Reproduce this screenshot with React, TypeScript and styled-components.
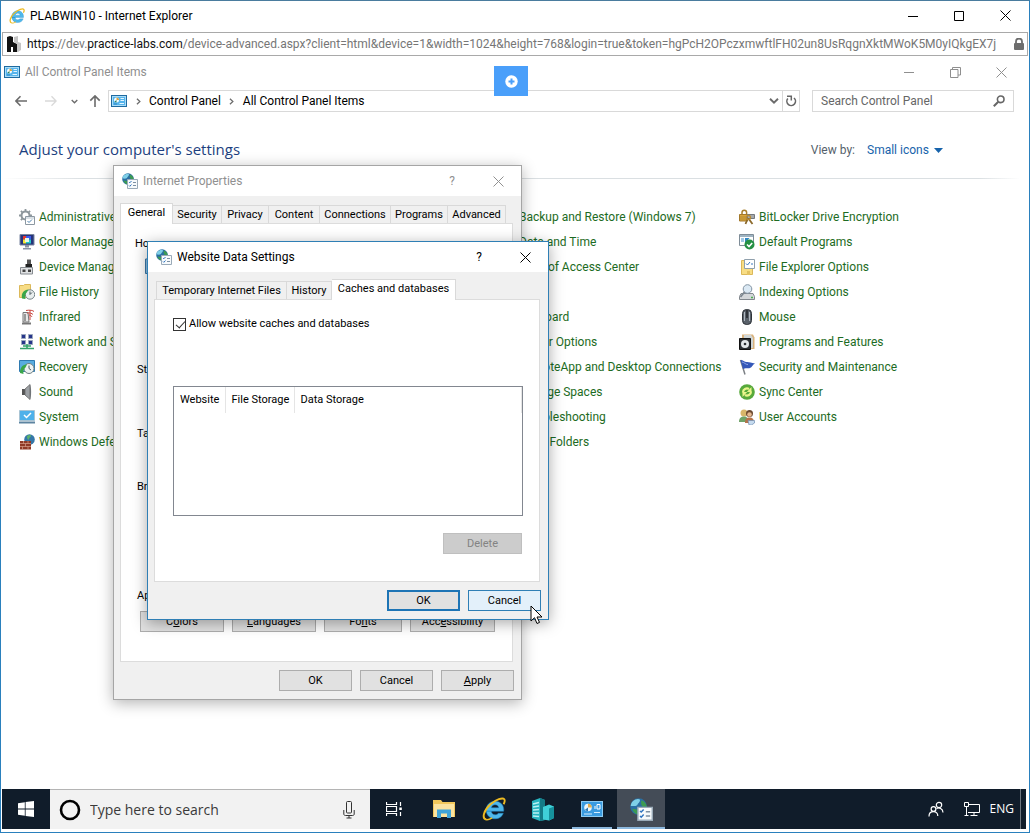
import React from "react";
import styled, { createGlobalStyle, css } from "styled-components";

const ui = `Roboto, "Open Sans", sans-serif`;
const display = `"Open Sans", "Noto Sans", sans-serif`;

const GlobalStyle = createGlobalStyle`
  * { box-sizing: border-box; }
  body { margin: 0; background: #fff; color: #000; font: 12px/16px ${ui}; }
  button, input, select { font: inherit; color: inherit; }
  ul { list-style: none; margin: 0; padding: 0; }
  svg { display: block; flex: none; }
`;

/* ---------- outer browser window ---------- */

const BrowserWindow = styled.div`
  min-height: 100vh;
  display: flex;
  flex-direction: column;
  border: 1px solid #2a80bd;
  border-top-color: #4a7c9e;
  padding: 0 1px 3px 1px;
  overflow: hidden;
`;

const TitleBar = styled.header<{ $inactive?: boolean }>`
  display: flex;
  align-items: center;
  gap: 5px;
  height: ${(p) => (p.$inactive ? 32 : 29)}px;
  margin-bottom: ${(p) => (p.$inactive ? 0 : 2)}px;
  padding: ${(p) => (p.$inactive ? "0 2px" : "0 0 0 7px")};
  color: ${(p) => (p.$inactive ? "#8f8f8f" : "#000")};
`;

const WindowTitle = styled.span`
  flex: 1;
  white-space: nowrap;
`;

const CaptionButton = styled.button`
  width: 46px;
  height: 29px;
  padding: 0;
  border: 0;
  background: none;
  display: flex;
  align-items: center;
  justify-content: center;
`;

const CaptionGroup = styled.div`
  display: flex;
`;

const AddressBar = styled.div`
  display: flex;
  align-items: center;
  gap: 4px;
  height: 24px;
  padding: 0 2px 0 4px;
  border: 1px solid #a9a9a9;
`;

const AddressLink = styled.a`
  flex: 1;
  min-width: 0;
  overflow: hidden;
  white-space: nowrap;
  color: #767676;
  text-decoration: none;
  b { color: #111; font-weight: 400; }
`;

/* ---------- remote desktop ---------- */

const Desktop = styled.main`
  position: relative;
  flex: 1;
  display: flex;
  flex-direction: column;
  margin-right: 2px;
`;

const SessionTab = styled.button`
  position: absolute;
  top: 10px;
  left: calc(50% - 20px);
  width: 34px;
  height: 30px;
  padding: 0;
  border: 0;
  background: #4a9ffa;
  display: flex;
  align-items: center;
  justify-content: center;
`;

const NavRow = styled.nav`
  display: flex;
  align-items: center;
  height: 22px;
  margin-top: 2px;
  padding: 0 12px 0 4px;
`;

const NavButton = styled.button<{ $w: number }>`
  width: ${(p) => p.$w}px;
  height: 20px;
  padding: 0;
  border: 0;
  background: none;
  display: flex;
  align-items: center;
  justify-content: center;
`;

const PathBox = styled.div`
  flex: 1;
  display: flex;
  align-items: center;
  height: 22px;
  padding-left: 2px;
  border: 1px solid #d9d9d9;
`;

const Crumb = styled.a`
  color: #000;
  text-decoration: none;
  white-space: nowrap;
`;

const Chevron = styled.span`
  width: 22px;
  display: flex;
  justify-content: center;
`;

const PathTail = styled.div`
  flex: 1;
  display: flex;
  justify-content: flex-end;
`;

const RefreshCell = styled.div`
  border-left: 1px solid #d9d9d9;
`;

const SearchBox = styled.label`
  display: flex;
  align-items: center;
  width: 202px;
  height: 22px;
  margin-left: 12px;
  padding: 0 8px;
  border: 1px solid #d9d9d9;
  input {
    flex: 1;
    min-width: 0;
    padding: 0;
    border: 0;
    outline: 0;
    background: none;
  }
  input::placeholder { color: #666; opacity: 1; }
`;

const HeadingRow = styled.div`
  display: flex;
  align-items: center;
  justify-content: space-between;
  height: 66px;
  padding: 10px 83px 0 17px;
`;

const Heading = styled.h1`
  margin: 0;
  padding-bottom: 2px;
  font-family: ${display};
  font-size: 15px;
  line-height: 20px;
  font-weight: 400;
  color: #1d3f80;
`;

const ViewBy = styled.label`
  display: flex;
  align-items: center;
  color: #555f6b;
  gap: 12px;
`;

const ViewSelect = styled.span`
  display: flex;
  align-items: center;
  gap: 5px;
  color: #1763ab;
  select {
    appearance: none;
    border: 0;
    padding: 0;
    background: none;
  }
`;

const Rule = styled.div`
  height: 1px;
  margin-right: 6px;
  background: linear-gradient(90deg, #fff, #dadfe2 8%, #dadfe2 96%, #fff);
`;

const ItemGrid = styled.div`
  display: grid;
  grid-template-columns: repeat(4, 240px);
  padding: 25px 0 0 17px;
  flex: 1;
`;

const ItemColumn = styled.ul<{ $col: number }>`
  grid-column: ${(p) => p.$col};
`;

const Item = styled.li`
  height: 25px;
  display: flex;
  align-items: center;
`;

const ItemLink = styled.a`
  display: flex;
  align-items: center;
  gap: 4px;
  color: #1d6b23;
  text-decoration: none;
  white-space: nowrap;
`;

const IconSlot = styled.span`
  width: 16px;
  height: 16px;
`;

/* ---------- dialogs ---------- */

const Dialog = styled.section<{ $x: number; $y: number; $w: number; $active?: boolean }>`
  position: absolute;
  left: ${(p) => p.$x}px;
  top: ${(p) => p.$y}px;
  width: ${(p) => p.$w}px;
  padding-bottom: 8px;
  background: #f0f0f0;
  font-size: 11px;
  border: 1px solid ${(p) => (p.$active ? "#2f7fb5" : "#a5a5a5")};
  box-shadow: ${(p) =>
    p.$active ? "0 3px 14px rgba(0,0,0,.34)" : "0 3px 14px rgba(0,0,0,.3)"};
`;

const DialogTitle = styled.header<{ $active?: boolean }>`
  display: flex;
  align-items: center;
  gap: 5px;
  height: 30px;
  padding-left: 8px;
  background: #fff;
  font-size: 12px;
  color: ${(p) => (p.$active ? "#000" : "#909090")};
`;

const TabStrip = styled.div<{ $indent?: boolean }>`
  display: flex;
  align-items: flex-end;
  height: 27px;
  padding-left: ${(p) => (p.$indent ? 8 : 6)}px;
`;

const Tab = styled.button<{ $selected?: boolean; $w: number }>`
  position: relative;
  width: ${(p) => p.$w}px;
  height: 18px;
  padding: 0;
  border: 1px solid #d9d9d9;
  border-bottom: 0;
  border-left-width: 0;
  background: #f0f0f0;
  line-height: 16px;
  white-space: nowrap;
  &:first-child { border-left-width: 1px; }
  ${(p) =>
    p.$selected &&
    css`
      height: 21px;
      margin-bottom: -1px;
      padding-bottom: 2px;
      background: #fff;
      z-index: 1;
    `}
`;

const TabPanel = styled.div<{ $h: number }>`
  height: ${(p) => p.$h}px;
  margin: 0 8px 0 6px;
  background: #fff;
  border: 1px solid #dcdcdc;
`;

const ButtonRow = styled.div`
  display: flex;
  justify-content: flex-end;
  gap: 8px;
  padding: 8px 7px 0 0;
`;

const PushButton = styled.button<{ $w?: number; $tone?: "default" | "hover" }>`
  width: ${(p) => p.$w ?? 73}px;
  height: 21px;
  padding: 0;
  border: 1px solid #adadad;
  background: #e1e1e1;
  line-height: 16px;
  ${(p) => p.$tone === "default" && css`border: 2px solid #1d74b5;`}
  ${(p) => p.$tone === "hover" && css`border-color: #2f7fb5; background: #e3f0fa;`}
  &:disabled { background: #cccccc; border-color: #bfbfbf; color: #838383; }
`;

const GeneralPage = styled.div`
  display: flex;
  flex-direction: column;
  padding: 12px 0 0 14px;
`;

const GroupLabel = styled.div<{ $space: number; $inset?: boolean }>`
  height: 16px;
  margin-bottom: ${(p) => p.$space}px;
  padding-left: ${(p) => (p.$inset ? 2 : 0)}px;
`;

const HomeIcon = styled.div`
  padding-left: 10px;
  height: 16px;
  margin-bottom: 88px;
`;

const AppearanceRow = styled.div`
  display: flex;
  gap: 8px;
  padding-left: 5px;
`;

const CachePage = styled.div`
  display: flex;
  flex-direction: column;
  padding: 16px 16px 0 18px;
`;

const CheckLabel = styled.label`
  display: flex;
  align-items: center;
  gap: 3px;
  height: 16px;
`;

const CheckBox = styled.input`
  appearance: none;
  position: relative;
  width: 13px;
  height: 13px;
  margin: 0;
  border: 1px solid #333;
  background: #fff;
  &:checked::after {
    content: "";
    position: absolute;
    left: 4px;
    top: 0;
    width: 4px;
    height: 8px;
    border: solid #333;
    border-width: 0 1px 1px 0;
    transform: rotate(42deg);
  }
`;

const ListBox = styled.div`
  height: 130px;
  margin-top: 54px;
  border: 1px solid #828790;
`;

const DataTable = styled.table`
  width: 100%;
  table-layout: fixed;
  border-collapse: collapse;
  th {
    height: 26px;
    padding: 0 0 0 6px;
    border-right: 1px solid #e5e5e5;
    font-weight: 400;
    text-align: left;
    white-space: nowrap;
  }
  th:nth-child(1) { width: 51px; }
  th:nth-child(2) { width: 69px; }
`;

const DeleteRow = styled.div`
  display: flex;
  justify-content: flex-end;
  padding: 17px 1px 0 0;
`;

const Pointer = styled.svg`
  position: absolute;
  left: 528px;
  top: 549px;
`;

/* ---------- taskbar ---------- */

const Taskbar = styled.footer`
  display: flex;
  height: 40px;
  background: #101c2a;
  color: #fff;
`;

const TaskButton = styled.button<{ $active?: boolean; $running?: boolean; $w?: number }>`
  width: ${(p) => p.$w ?? 48}px;
  height: 40px;
  margin-right: 1px;
  padding: ${(p) => (p.$active || p.$running ? "2px 0 0" : "0")};
  border: 0;
  border-bottom: ${(p) => (p.$active || p.$running ? "2px solid #8cb8de" : "0")};
  background: ${(p) => (p.$active ? "#444c57" : "none")};
  display: flex;
  align-items: center;
  justify-content: center;
  ${(p) => p.$running && css`width: 40px; margin: 0 5px 0 4px;`}
`;

const StartButton = styled(TaskButton)`
  margin-right: 0;
`;

const Cortana = styled.label`
  display: flex;
  align-items: center;
  width: 320px;
  padding: 0 15px 0 9px;
  background: #f2f2f2;
  border-top: 1px solid #b4b4b4;
  color: #333;
  input {
    flex: 1;
    min-width: 0;
    margin-left: 9px;
    padding: 0;
    border: 0;
    outline: 0;
    background: none;
    font-family: ${display};
    font-size: 14px;
    line-height: 20px;
  }
  input::placeholder { color: #3a3a3a; opacity: 1; }
`;

const Tray = styled.div`
  flex: 1;
  display: flex;
  align-items: center;
  justify-content: flex-end;
  gap: 10px;
  font-family: ${display};
`;

const PeopleSlot = styled.span`
  padding-right: 10px;
`;

const ShowDesktop = styled.button`
  width: 6px;
  height: 40px;
  padding: 0;
  margin-left: -4px;
  border: 0;
  border-left: 1px solid #6d757e;
  background: none;
`;

/* ---------- drawings ---------- */

const Svg = ({ size = 16, vb = 16, children }: { size?: number; vb?: number; children: React.ReactNode }) => (
  <svg width={size} height={size} viewBox={`0 0 ${vb} ${vb}`} fill="none" aria-hidden="true">
    {children}
  </svg>
);

const MinIcon = () => (
  <Svg size={10} vb={10}><path d="M0 5.5h10" stroke="currentColor" /></Svg>
);
const MaxIcon = () => (
  <Svg size={10} vb={10}><path d="M.5.5h9v9h-9z" stroke="currentColor" /></Svg>
);
const RestoreIcon = () => (
  <Svg size={11} vb={11}><path d="M.5 2.5h7.5v8H.5zM2.5 2.5v-2h8v7.5H8" stroke="currentColor" /></Svg>
);
const CloseIcon = () => (
  <Svg size={11} vb={11}><path d="M.5.5l10 10M10.5.5l-10 10" stroke="currentColor" /></Svg>
);

const IeIcon = ({ size = 16 }: { size?: number }) => (
  <Svg size={size} vb={24}>
    <path d="M4.5 14.200h17.200c.6-5.800-3-10-8.700-10-5 0-8.800 3.700-8.800 8.800s3.700 8.800 8.900 8.800c4 0 7-2 8.200-5.500h-5c-.7 1-1.700 1.500-3.100 1.500-2.200 0-3.700-1.400-3.900-3.600zM9.400 10.700c.4-1.900 1.800-3 3.700-3s3.300 1.100 3.600 3z" fill="#4fb8ea" stroke="#1d86c4" strokeWidth=".5" fillRule="evenodd" />
    <path d="M4 22.500C-.500 21 2 13 8.500 7.300 14 2.400 20.800.2 22.300 2.300c.8 1.100.3 3-.7 4.900" stroke="#eebb22" strokeWidth="1.900" />
    <path d="M4 22.500c1.700.5 4-.4 6.200-1.700" stroke="#eebb22" strokeWidth="1.500" />
  </Svg>
);

const SiteIcon = () => (
  <Svg>
    <path d="M0 1l3-1 3 1v5l4 2v8H6v-5H4v5H0z" fill="#111" />
    <path d="M7 1l4-1v6l3 1v7l-3 2h-1V8L7 6z" fill="#c4c4c4" />
  </Svg>
);

const LockIcon = () => (
  <Svg size={12} vb={12}>
    <path d="M3 6V3.500a3 3 0 016 0V6" stroke="#6d6d6d" strokeWidth="1.800" />
    <rect x="1" y="5" width="10" height="7" rx="1" fill="#6d6d6d" />
  </Svg>
);

const PanelIcon = () => (
  <Svg>
    <rect x=".5" y="2.500" width="15" height="11" fill="#55b4ec" stroke="#1f6a9f" />
    <rect x="1.500" y="3.500" width="13" height="9" stroke="#a8dcf8" />
    <circle cx="5.500" cy="7" r="2.500" fill="#f4fbff" />
    <path d="M5.500 7V4.500A2.500 2.500 0 018 7z" fill="#e0a33e" />
    <path d="M5.500 7l-2 1.500A2.500 2.500 0 005.500 9.500z" fill="#2f7f57" />
    <path d="M9.500 5.500h3.500M9.500 7.500h3.500M8.500 10.500h4.500" stroke="#e4f5fe" />
    <path d="M3 11h3" stroke="#2d86c4" />
  </Svg>
);

const GlobeListIcon = ({ size = 16 }: { size?: number }) => (
  <Svg size={size}>
    <circle cx="6" cy="6" r="5.800" fill="#2b6fa3" />
    <path d="M2 2.300C4 .5 6 .3 7 1.200 7 3 5.500 3.500 5 5 3.500 6 2 5.500.5 5.500c0-1 .6-2.300 1.500-3.200z" fill="#7fd0e8" />
    <path d="M8 1.500c2 .6 3.400 2.500 3.700 4.500H9C7.500 5 7.500 3 8 1.500zM1.500 7.500L5 8l.5 3.500C3.500 11 2 9.500 1.500 7.500z" fill="#3d9b52" />
    <path d="M5.500 6.500h10v9h-10z" fill="#f7fafc" stroke="#9aaab8" />
    <path d="M7 9l.8.8L9.500 8M7 12.500l.8.8L9.500 11.500" stroke="#2f74c0" />
    <path d="M11 9.500h3M11 12.500h3" stroke="#7d90a3" />
  </Svg>
);

const BackIcon = () => (
  <Svg size={12} vb={12}><path d="M12 6H1M5.500 1.300L.9 6l4.600 4.700" stroke="#6b6b6b" strokeWidth="1.600" /></Svg>
);
const ForwardIcon = () => (
  <Svg size={12} vb={12}><path d="M0 6h11M6.500 1.300L11.100 6l-4.600 4.700" stroke="#d9d9d9" strokeWidth="1.300" /></Svg>
);
const UpIcon = () => (
  <Svg size={12} vb={12}><path d="M6 12V1M1.300 5.600L6 .9l4.700 4.700" stroke="#6b6b6b" strokeWidth="1.600" /></Svg>
);
const DownIcon = ({ size = 7 }: { size?: number }) => (
  <Svg size={size} vb={8}><path d="M.8 2.200L4 5.400l3.200-3.200" stroke="#6b6b6b" strokeWidth="1.500" /></Svg>
);
const RightIcon = () => (
  <Svg size={7} vb={8}><path d="M2.200 .8L5.600 4 2.200 7.200" stroke="#6b6b6b" strokeWidth="1.400" /></Svg>
);
const RefreshIcon = () => (
  <Svg size={12} vb={12}>
    <path d="M9 3A4.300 4.300 0 112.800 3.600" stroke="#666" strokeWidth="1.600" />
    <path d="M2 1.300h4.300v4.200" stroke="#666" strokeWidth="1.500" />
  </Svg>
);
const MagnifierIcon = () => (
  <Svg size={12} vb={12}>
    <circle cx="7.700" cy="4.300" r="3.300" stroke="#666" strokeWidth="1.600" />
    <path d="M5.300 6.800L.8 11.300" stroke="#666" strokeWidth="2" />
  </Svg>
);

const drawings: Record<string, React.ReactNode> = {
  gear: (
    <>
      <circle cx="6.500" cy="6.500" r="4" stroke="#8e979c" strokeWidth="2" />
      <path d="M6.500 0v2.500M0 6.500h2.500M1.900 1.900l1.700 1.700M11.100 1.900L9.400 3.600M1.900 11.100l1.700-1.700M10.500 6.500H13" stroke="#8e979c" strokeWidth="1.800" />
      <path d="M6.500 7.500h9v8h-9z" fill="#fff" stroke="#8c98a2" />
      <path d="M7 9h8" stroke="#b5c3cc" />
      <path d="M8.500 12l1.500 1.500 3-3" stroke="#4d80ad" />
    </>
  ),
  color: (
    <>
      <path d="M1 .5h14v10.500H1z" fill="#26347a" stroke="#7a86a0" />
      <path d="M4 2h3v3.500H4z" fill="#e6382f" />
      <path d="M7 2h5v3.500H7z" fill="#3a5cf0" />
      <path d="M4 5.500h3V9.500H4z" fill="#f6e834" />
      <path d="M7 5.500h5v4H7z" fill="#27c8c8" />
      <path d="M6 4h4v4H6z" fill="#e8f8e8" />
      <path d="M6 11h4v2.500H6zM4 14h8v1.500H4z" fill="#8a93a5" />
    </>
  ),
  device: (
    <>
      <path d="M8 .5h4v5H8z" fill="#555" />
      <path d="M6.500 5h6.500v5H6.500z" fill="#222" />
      <path d="M1.500 8.500h12v6.500h-12z" fill="#dfe1e3" stroke="#868b90" />
      <path d="M3.500 10.500h3v2.500h-3zM9 10.500h3v2.500H9z" fill="#444" />
    </>
  ),
  history: (
    <>
      <path d="M.5 1.500h4l1-1h6v13H.5z" fill="#f7dc85" stroke="#dcb95a" />
      <circle cx="11" cy="10.500" r="4.700" fill="#e9eeee" stroke="#77858a" />
      <path d="M11 7.500v3l2-2" stroke="#4b5a60" />
      <path d="M3 14.500C2 9 5 5.500 9.500 5.500L8 8C6 10 6 12 6.500 15z" fill="#3aa648" />
    </>
  ),
  infrared: (
    <>
      <path d="M4 3.500h5l1 9.500H4z" fill="#e8e8e8" stroke="#777" />
      <path d="M6 5v7" stroke="#999" strokeWidth="2" />
      <path d="M3 14.500h9" stroke="#777" strokeWidth="2" />
      <path d="M7 1.500c4-.8 7 0 8 1M8 4c3-.5 5 .5 6 1.500M10 6c1.500 0 2.500 1 3 2M11 1v10" stroke="#c9463f" />
    </>
  ),
  network: (
    <>
      <path d="M2.500.5h4v4h-4zM9.500.5h4v4h-4zM2.500 6.500h4v4h-4zM9.500 6.500h4v4h-4z" fill="#26358a" stroke="#9aa7bd" />
      <path d="M8 10v4M4 12h8M1 14.500h14" stroke="#35a26b" strokeWidth="1.600" />
    </>
  ),
  recovery: (
    <>
      <path d="M.5 1.500h15v11H.5z" fill="#58ace0" stroke="#2f7ab0" />
      <circle cx="10" cy="9.500" r="5" fill="#edf2f2" stroke="#6f8085" />
      <path d="M10 6.500v3l2 1.500" stroke="#4b5a60" />
      <path d="M1 14C1 8 4 5.500 8 5.500L6.500 8.500C4.500 10 4 12 4.500 15z" fill="#3aa648" />
    </>
  ),
  sound: (
    <>
      <path d="M3 5h3v6H3z" fill="#555" />
      <path d="M6 5l5-4.500v15L6 11z" fill="#9da1a5" stroke="#666" strokeWidth=".8" />
      <path d="M11 .5c1.500 3 1.500 12 0 15z" fill="#707478" />
    </>
  ),
  system: (
    <>
      <path d="M.5 1.500h15v10H.5z" fill="#4fb1ea" stroke="#a9c4d4" />
      <path d="M5 6l2.500 2.500L12 4" stroke="#fff" strokeWidth="1.500" />
      <path d="M0 13.500h16" stroke="#5d84a0" strokeWidth="2" />
    </>
  ),
  firewall: (
    <>
      <circle cx="10.500" cy="5.500" r="5.300" fill="#3577a8" />
      <path d="M8 2c2-1.500 4-1 4 0s-2 1.500-2 3-2 1-2-3z" fill="#5cb36a" />
      <path d="M1 7h11v8.500H1z" fill="#8f3a26" />
      <path d="M1 9.500h11M1 12.500h11M4.500 7v2.500M9 7v2.500M6.500 9.500v3M3.500 12.500v3M9 12.500v3" stroke="#d9a08c" strokeWidth=".7" />
    </>
  ),
  bitlocker: (
    <>
      <path d="M3 6V3.500a2.300 2.300 0 014.600 0V6" stroke="#a97f2c" strokeWidth="1.500" />
      <path d="M.5 5.500h8V12h-8z" fill="#d8a53d" stroke="#a3782a" />
      <path d="M1 8h7M1 10h7" stroke="#a3782a" strokeWidth=".6" />
      <path d="M8.500 5.500h7v4h-7z" fill="#a5a9ad" stroke="#74797e" />
      <path d="M9 9l-2.500 6M9.500 9.500l4 5.500" stroke="#8c6a2c" strokeWidth="1.800" />
      <circle cx="9.500" cy="8.500" r="2" stroke="#b88b34" strokeWidth="1.300" />
    </>
  ),
  defaults: (
    <>
      <path d="M.5.5h14v11H.5z" fill="#fff" stroke="#7e8c97" />
      <path d="M1 2h13" stroke="#9fb4c2" strokeWidth="2" />
      <path d="M2 4h3v4H2z" fill="#9fc8e4" />
      <path d="M6 4h4.500L6 9z" fill="#2f86c4" />
      <circle cx="10.500" cy="10.500" r="5" fill="#249043" />
      <path d="M8 10.500l2 2 3.200-3.500" stroke="#fff" strokeWidth="1.600" />
    </>
  ),
  explorer: (
    <>
      <path d="M2.500 1.500h11v14h-11z" fill="#f8dd84" stroke="#dbb85a" />
      <path d="M5.500.5h10v9h-10z" fill="#fff" stroke="#90a0ac" />
      <path d="M7 4.500l1.500 1.500 2.500-3M12 5h2" stroke="#3a78bf" />
      <path d="M9.500 12v4" stroke="#e4c263" strokeWidth="3" />
    </>
  ),
  indexing: (
    <>
      <path d="M2 9.500h12l1.500 3v3H.5v-3z" fill="#d4d7da" stroke="#82888e" />
      <path d="M12 13.500h2" stroke="#4caf50" strokeWidth="1.500" />
      <circle cx="8.500" cy="5" r="4.300" fill="#dbe9f4" stroke="#8394a3" />
      <path d="M5.500 8L1.500 13" stroke="#7d8790" strokeWidth="1.800" />
    </>
  ),
  mouse: (
    <>
      <rect x="3.500" y=".5" width="9" height="15" rx="4" fill="#59616a" stroke="#2d3238" />
      <path d="M5.500 3v9M10.500 3v9" stroke="#aeb6be" />
      <path d="M8 1v8" stroke="#22262b" strokeWidth="1.500" />
    </>
  ),
  programs: (
    <>
      <path d="M3 .5h11l1.500 3V15H3z" fill="#d9b27d" />
      <path d="M5 1h7l2 3v10H5z" fill="#cfd6d8" />
      <path d="M.5 4.500h11v11H.5z" fill="#2b2f33" stroke="#111" />
      <circle cx="6" cy="10" r="4" fill="#e4e8ea" />
      <circle cx="6" cy="10" r="1.300" fill="#2b2f33" />
    </>
  ),
  flag: (
    <>
      <path d="M1.500 1l4.500 14.500" stroke="#7c8085" strokeWidth="1.500" />
      <path d="M1.500 1c3 0 4 2.300 6.500 2 2-.2 4 1 8 1.500-2.500 1-3 4-5 4.500-2 .5-5-.5-7 1z" fill="#3558b8" />
      <path d="M3 3c3 .5 3 2.500 6 2.500" stroke="#8ea6e6" />
    </>
  ),
  sync: (
    <>
      <circle cx="8" cy="8" r="7.800" fill="#57a93b" />
      <path d="M4 8.500A4 4 0 0110 5M12 7.500A4 4 0 016 11" stroke="#eaf58c" strokeWidth="2.200" />
      <path d="M12.500 3v5H7.800zM3.500 13V8h4.700z" fill="#eaf58c" />
    </>
  ),
  users: (
    <>
      <circle cx="5" cy="4" r="3.500" fill="#d8b66a" />
      <path d="M0 13c0-4 2-5.500 5-5.500S9 9 9 13z" fill="#6fa368" />
      <circle cx="10.500" cy="4.500" r="3.500" fill="#6b4930" />
      <circle cx="10.500" cy="5.500" r="2.300" fill="#e5b78e" />
      <path d="M6 14c0-4 1.500-5.500 4.500-5.500s4.500 1.500 4.500 5.500z" fill="#b5734a" />
      <path d="M9 11.500h6.500V14l-3 2H10z" fill="#c6dbef" stroke="#6d8db1" strokeWidth=".7" />
    </>
  ),
};

/* ---------- data ---------- */

type Entry = { name: string; icon?: string } | null;

const columns: { col: number; items: Entry[] }[] = [
  {
    col: 1,
    items: [
      { name: "Administrative Tools", icon: "gear" },
      { name: "Color Management", icon: "color" },
      { name: "Device Manager", icon: "device" },
      { name: "File History", icon: "history" },
      { name: "Infrared", icon: "infrared" },
      { name: "Network and Sharing Center", icon: "network" },
      { name: "Recovery", icon: "recovery" },
      { name: "Sound", icon: "sound" },
      { name: "System", icon: "system" },
      { name: "Windows Defender Firewall", icon: "firewall" },
    ],
  },
  {
    col: 3,
    items: [
      { name: "Backup and Restore (Windows 7)" },
      { name: "Date and Time" },
      { name: "Ease of Access Center" },
      null,
      { name: "Keyboard" },
      { name: "Power Options" },
      { name: "RemoteApp and Desktop Connections" },
      { name: "Storage Spaces" },
      { name: "Troubleshooting" },
      { name: "Work Folders" },
    ],
  },
  {
    col: 4,
    items: [
      { name: "BitLocker Drive Encryption", icon: "bitlocker" },
      { name: "Default Programs", icon: "defaults" },
      { name: "File Explorer Options", icon: "explorer" },
      { name: "Indexing Options", icon: "indexing" },
      { name: "Mouse", icon: "mouse" },
      { name: "Programs and Features", icon: "programs" },
      { name: "Security and Maintenance", icon: "flag" },
      { name: "Sync Center", icon: "sync" },
      { name: "User Accounts", icon: "users" },
    ],
  },
];

const propertyTabs: [string, number][] = [
  ["General", 53],
  ["Security", 49],
  ["Privacy", 47],
  ["Content", 51],
  ["Connections", 71],
  ["Programs", 57],
  ["Advanced", 58],
];

/* ---------- page ---------- */

const ControlPanel = () => (
  <>
    <TitleBar $inactive>
      <PanelIcon />
      <WindowTitle>All Control Panel Items</WindowTitle>
      <CaptionGroup>
        <CaptionButton aria-label="Minimize"><MinIcon /></CaptionButton>
        <CaptionButton aria-label="Restore"><RestoreIcon /></CaptionButton>
        <CaptionButton aria-label="Close"><CloseIcon /></CaptionButton>
      </CaptionGroup>
    </TitleBar>
    <NavRow>
      <NavButton $w={30} aria-label="Back"><BackIcon /></NavButton>
      <NavButton $w={30} aria-label="Forward"><ForwardIcon /></NavButton>
      <NavButton $w={16} aria-label="Recent"><DownIcon /></NavButton>
      <NavButton $w={26} aria-label="Up"><UpIcon /></NavButton>
      <PathBox>
        <PanelIcon />
        <Chevron><RightIcon /></Chevron>
        <Crumb href="#">Control Panel</Crumb>
        <Chevron><RightIcon /></Chevron>
        <Crumb href="#">All Control Panel Items</Crumb>
        <PathTail>
          <NavButton $w={16} aria-label="Previous locations"><DownIcon size={10} /></NavButton>
          <RefreshCell>
            <NavButton $w={16} aria-label="Refresh"><RefreshIcon /></NavButton>
          </RefreshCell>
        </PathTail>
      </PathBox>
      <SearchBox>
        <input type="text" placeholder="Search Control Panel" aria-label="Search Control Panel" />
        <MagnifierIcon />
      </SearchBox>
    </NavRow>
    <HeadingRow>
      <Heading>Adjust your computer's settings</Heading>
      <ViewBy>
        View by:
        <ViewSelect>
          <select defaultValue="small">
            <option value="small">Small icons</option>
          </select>
          <svg width="9" height="5" viewBox="0 0 9 5" aria-hidden="true">
            <path d="M0 0h9L4.500 5z" fill="#1763ab" />
          </svg>
        </ViewSelect>
      </ViewBy>
    </HeadingRow>
    <Rule />
    <ItemGrid>
      {columns.map(({ col, items }) => (
        <ItemColumn key={col} $col={col}>
          {items.map((item, i) => (
            <Item key={i}>
              {item && (
                <ItemLink href="#">
                  {item.icon ? <Svg>{drawings[item.icon]}</Svg> : <IconSlot />}
                  {item.name}
                </ItemLink>
              )}
            </Item>
          ))}
        </ItemColumn>
      ))}
    </ItemGrid>
  </>
);

const InternetProperties = () => (
  <Dialog $x={111} $y={109} $w={409} aria-label="Internet Properties">
    <DialogTitle>
      <GlobeListIcon />
      <WindowTitle>Internet Properties</WindowTitle>
      <CaptionGroup>
        <CaptionButton aria-label="Help">?</CaptionButton>
        <CaptionButton aria-label="Close"><CloseIcon /></CaptionButton>
      </CaptionGroup>
    </DialogTitle>
    <TabStrip role="tablist">
      {propertyTabs.map(([name, w], i) => (
        <Tab key={name} role="tab" $w={w} $selected={i === 0}>{name}</Tab>
      ))}
    </TabStrip>
    <TabPanel $h={439}>
      <GeneralPage>
        <GroupLabel $space={6}>Home page</GroupLabel>
        <HomeIcon>
          <Svg><path d="M.5 1v14.500h14V6L8 .8.500 1z" fill="#8fbfe2" stroke="#3a78a8" /></Svg>
        </HomeIcon>
        <GroupLabel $inset $space={48}>Startup</GroupLabel>
        <GroupLabel $inset $space={37}>Tabs</GroupLabel>
        <GroupLabel $inset $space={93}>Browsing history</GroupLabel>
        <GroupLabel $inset $space={7}>Appearance</GroupLabel>
        <AppearanceRow>
          <PushButton $w={84}>C<u>o</u>lors</PushButton>
          <PushButton $w={84}><u>L</u>anguages</PushButton>
          <PushButton $w={78}>Fo<u>n</u>ts</PushButton>
          <PushButton $w={85}>Acc<u>e</u>ssibility</PushButton>
        </AppearanceRow>
      </GeneralPage>
    </TabPanel>
    <ButtonRow>
      <PushButton>OK</PushButton>
      <PushButton>Cancel</PushButton>
      <PushButton><u>A</u>pply</PushButton>
    </ButtonRow>
  </Dialog>
);

const WebsiteDataSettings = () => (
  <Dialog $active $x={145} $y={185} $w={402} aria-label="Website Data Settings">
    <DialogTitle $active>
      <GlobeListIcon />
      <WindowTitle>Website Data Settings</WindowTitle>
      <CaptionGroup>
        <CaptionButton aria-label="Help">?</CaptionButton>
        <CaptionButton aria-label="Close"><CloseIcon /></CaptionButton>
      </CaptionGroup>
    </DialogTitle>
    <TabStrip role="tablist" $indent>
      <Tab role="tab" $w={131}>Temporary Internet Files</Tab>
      <Tab role="tab" $w={45}>History</Tab>
      <Tab role="tab" $w={124} $selected>Caches and databases</Tab>
    </TabStrip>
    <TabPanel $h={283}>
      <CachePage>
        <CheckLabel>
          <CheckBox type="checkbox" defaultChecked />
          Allow website caches and databases
        </CheckLabel>
        <ListBox>
          <DataTable>
            <thead>
              <tr><th>Website</th><th>File Storage</th><th>Data Storage</th></tr>
            </thead>
          </DataTable>
        </ListBox>
        <DeleteRow>
          <PushButton $w={79} disabled>Delete</PushButton>
        </DeleteRow>
      </CachePage>
    </TabPanel>
    <ButtonRow>
      <PushButton $tone="default">OK</PushButton>
      <PushButton $tone="hover">Cancel</PushButton>
    </ButtonRow>
  </Dialog>
);

const DesktopTaskbar = () => (
  <Taskbar>
    <StartButton aria-label="Start">
      <Svg><path d="M0 2.200L6.800 1.200v6.400H0zM7.600 1.100L16 0v7.600H7.600zM0 8.400h6.800v6.400L0 13.800zM7.600 8.400H16V16l-8.400-1.100z" fill="#fff" /></Svg>
    </StartButton>
    <Cortana>
      <Svg size={22} vb={22}><circle cx="11" cy="11" r="9" stroke="#000" strokeWidth="2.600" /></Svg>
      <input type="text" placeholder="Type here to search" aria-label="Type here to search" />
      <svg width="12" height="18" viewBox="0 0 12 18" fill="none" aria-hidden="true">
        <rect x="3.500" y=".5" width="5" height="11.500" rx="1" stroke="#333" />
        <path d="M.8 9v4c0 1 .7 1.500 1.700 1.500h7c1 0 1.700-.5 1.700-1.500V9M6 14.500V17M3.500 17h5" stroke="#333" />
      </svg>
    </Cortana>
    <TaskButton aria-label="Task View">
      <Svg><path d="M.5 1v2.500h10V1M.5 15v-2.500h10V15M.5 5.500h10v5H.5zM14.500 1v4M14.500 11v4" stroke="#fff" strokeWidth="1.200" /><path d="M13.300 6.500h2.500V9h-2.500z" fill="#fff" /></Svg>
    </TaskButton>
    <TaskButton $w={50} aria-label="File Explorer">
      <Svg size={22} vb={22}>
        <path d="M0 2h8l1.500 2H22v15H0z" fill="#f1c75b" />
        <path d="M1 6h20v13H1z" fill="#fbe3a0" />
        <path d="M4 20v-8.500h14V20h-4v-4.500H8V20z" fill="#3fa3d8" />
      </Svg>
    </TaskButton>
    <TaskButton aria-label="Internet Explorer"><IeIcon size={24} /></TaskButton>
    <TaskButton aria-label="Server Manager">
      <Svg size={24} vb={24}>
        <path d="M1 4l8-3 5 2v20l-5 1-8-3z" fill="#28b5c0" />
        <path d="M9 1l5 2v20l-5 1z" fill="#147b87" />
        <path d="M2 7l6-1.500M2 10l6-1M2 13l6-.5M2 16h6M2 19l6 .5" stroke="#b9f1f4" strokeWidth="1.300" />
        <path d="M12 10l6-2.500 5 2V21l-5 2.500-6-1z" fill="#3fd0d8" />
        <path d="M18 11.500l5-2V21l-5 2.500z" fill="#16919c" />
      </Svg>
    </TaskButton>
    <TaskButton $running aria-label="Control Panel">
      <svg width="22" height="16" viewBox="0 0 22 16" fill="none" aria-hidden="true">
        <rect x=".5" y=".5" width="21" height="15" fill="#3a9be0" stroke="#8ccbf3" />
        <circle cx="7" cy="6.500" r="3.800" fill="#eaf6fd" />
        <path d="M7 6.500V2.700a3.800 3.800 0 013.800 3.800z" fill="#e5ad4c" />
        <path d="M7 6.500l-3 2.300a3.800 3.800 0 003 1.500z" fill="#2f77b0" />
        <path d="M14 8V5M16 8V3.500h3V8z" stroke="#fff" />
        <path d="M3 13h8M13 11.500h6" stroke="#d7efff" />
      </svg>
    </TaskButton>
    <TaskButton $active aria-label="Internet Properties"><GlobeListIcon size={23} /></TaskButton>
    <Tray>
      <PeopleSlot>
        <Svg>
          <circle cx="11" cy="4" r="2.700" stroke="#fff" strokeWidth="1.200" />
          <circle cx="5.500" cy="8" r="2.400" stroke="#fff" strokeWidth="1.200" />
          <path d="M1 15.500c0-3 1.800-4.800 4.500-4.800s4.300 1.800 4.300 4.300M8.500 7.500c2.500-1.500 6.500 0 6.500 4" stroke="#fff" strokeWidth="1.200" />
        </Svg>
      </PeopleSlot>
      <Svg>
        <path d="M5 3.500h10.500v8H4M10 11.500v3M6.500 14.500h7M2.500 5v9M.5 14.500h4M.5 1.500h4v4h-4z" stroke="#fff" />
      </Svg>
      <span>ENG</span>
      <ShowDesktop aria-label="Show desktop" />
    </Tray>
  </Taskbar>
);

export default function App() {
  return (
    <BrowserWindow>
      <GlobalStyle />
      <TitleBar>
        <IeIcon />
        <WindowTitle>PLABWIN10 - Internet Explorer</WindowTitle>
        <CaptionGroup>
          <CaptionButton aria-label="Minimize"><MinIcon /></CaptionButton>
          <CaptionButton aria-label="Maximize"><MaxIcon /></CaptionButton>
          <CaptionButton aria-label="Close"><CloseIcon /></CaptionButton>
        </CaptionGroup>
      </TitleBar>
      <AddressBar>
        <SiteIcon />
        <AddressLink href="#">
          <b>https</b>://dev.<b>practice-labs.com</b>/device-advanced.aspx?client=html&amp;device=1&amp;width=1024&amp;height=768&amp;login=true&amp;token=hgPcH2OPczxmwftlFH02un8UsRqgnXktMWoK5M0yIQkgEX7j
        </AddressLink>
        <LockIcon />
      </AddressBar>
      <Desktop>
        <ControlPanel />
        <SessionTab aria-label="Session menu">
          <Svg size={13} vb={13}>
            <circle cx="6.500" cy="6.500" r="6.200" fill="#fff" />
            <path d="M6.500 3.500v6M3.500 6.500h6" stroke="#4a9ffa" strokeWidth="2" />
          </Svg>
        </SessionTab>
        <InternetProperties />
        <WebsiteDataSettings />
        <Pointer width="13" height="20" viewBox="0 0 13 20" aria-hidden="true">
          <path d="M1 1v15l3.500-3.300L7 18.500l2.500-1.100L7 12h5z" fill="#fff" stroke="#000" />
        </Pointer>
        <DesktopTaskbar />
      </Desktop>
    </BrowserWindow>
  );
}
